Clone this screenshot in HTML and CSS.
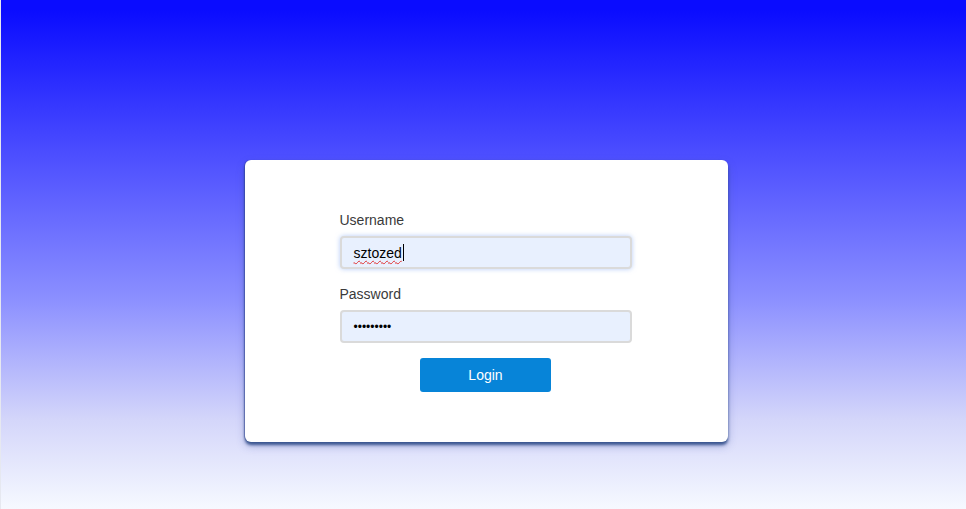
FILE: index.html
```html
<!DOCTYPE html>
<html lang="en">
<head>
<meta charset="utf-8">
<title>Login</title>
<link rel="stylesheet" href="styles.css">
</head>
<body>
<main class="page">
  <form class="card">
    <div class="form">
      <label class="label">Username</label>
      <div class="field focused"><span class="misspelled">sztozed</span><span class="caret"></span></div>
      <label class="label label-second">Password</label>
      <div class="field"><span class="dots">•••••••••</span></div>
      <div class="actions"><button type="button" class="btn">Login</button></div>
    </div>
  </form>
</main>
</body>
</html>
```
FILE: styles.css
```css
html, body {
  margin: 0;
  padding: 0;
  height: 100%;
}
body {
  font-family: "Liberation Sans", Arial, sans-serif;
  background: #f4f6fc;
  border-left: 1px solid #e6e8f0;
  box-sizing: border-box;
}
.page {
  height: 509px;
  background: linear-gradient(to bottom, #0a0cff 0px, #0a0cff 10px, #4a4cff 150px, #8c90ff 300px, #d4d6fa 420px, #f6f9ff 509px);
  display: flex;
  justify-content: center;
  padding-top: 160px;
  box-sizing: border-box;
}
.card {
  width: 483px;
  height: 282px;
  margin-left: 6px;
  background: #fff;
  border-radius: 6px;
  box-shadow: 0 3px 3px rgba(40, 70, 130, 0.85), 0 4px 8px rgba(60, 80, 160, 0.35), -1px 0 1px rgba(50, 60, 150, 0.5);
  display: flex;
  justify-content: center;
  padding-top: 51px;
  padding-right: 2px;
  box-sizing: border-box;
}
.form {
  width: 292px;
  display: flex;
  flex-direction: column;
}
.label {
  font-size: 14px;
  line-height: 18px;
  color: #3a3a3a;
  margin-bottom: 7px;
}
.label-second {
  margin-top: 16px;
}
.field {
  height: 33px;
  box-sizing: border-box;
  border: 2px solid #dadada;
  border-radius: 4px;
  background: #e8f0fe;
  padding-left: 12px;
  display: flex;
  align-items: center;
  font-size: 14px;
  color: #000;
}
.focused {
  box-shadow: 0 0 5px rgba(120, 160, 240, 0.55);
}
.misspelled {
  text-decoration: underline wavy #e03030;
  text-decoration-thickness: 1px;
  text-underline-offset: 2px;
}
.caret {
  width: 1px;
  height: 17px;
  background: #000;
  margin-left: 1px;
}
.dots {
  font-size: 12px;
  letter-spacing: 0;
}
.actions {
  display: flex;
  justify-content: center;
  margin-top: 15px;
}
.btn {
  width: 131px;
  height: 34px;
  border: none;
  border-radius: 3px;
  background: #0784d8;
  color: #fff;
  font-family: "Liberation Sans", Arial, sans-serif;
  font-size: 14px;
  padding: 0;
}
```
